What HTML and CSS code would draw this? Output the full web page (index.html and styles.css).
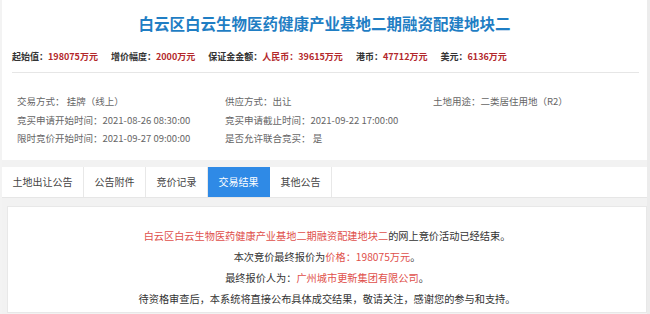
FILE: index.html
```html
<!DOCTYPE html>
<html lang="zh-CN">
<head>
  <meta charset="UTF-8" />
  <meta name="viewport" content="width=device-width, initial-scale=1.0"/>
  <title>交易结果</title>
  <link rel="stylesheet" href="styles.css">
</head>
<body>
  <div class="page">
    <h1 class="title">白云区白云生物医药健康产业基地二期融资配建地块二</h1>

    <div class="price-bar">
      <span class="price-item">起始值：<em>198075万元</em></span>
      <span class="price-item">增价幅度：<em>2000万元</em></span>
      <span class="price-item">保证金金额：<em>人民币：39615万元</em></span>
      <span class="price-item">港币：<em>47712万元</em></span>
      <span class="price-item">美元：<em>6136万元</em></span>
    </div>

    <div class="info">
      <span>交易方式： 挂牌（线上）</span>
      <span>供应方式：出让</span>
      <span>土地用途：二类居住用地（R2）</span>
      <span>竞买申请开始时间：2021-08-26 08:30:00</span>
      <span>竞买申请截止时间：2021-09-22 17:00:00</span>
      <span></span>
      <span>限时竞价开始时间：2021-09-27 09:00:00</span>
      <span>是否允许联合竞买： 是</span>
      <span></span>
    </div>

    <div class="tab-wrap">
      <nav class="tabs">
        <a href="#">土地出让公告</a>
        <a href="#">公告附件</a>
        <a href="#">竞价记录</a>
        <a href="#" class="active">交易结果</a>
        <a href="#">其他公告</a>
      </nav>
      <div class="result">
        <p><span class="red">白云区白云生物医药健康产业基地二期融资配建地块二</span>的网上竞价活动已经结束。</p>
        <p>本次竞价最终报价为<span class="red">价格：198075万元</span>。</p>
        <p>最终报价人为：<span class="red">广州城市更新集团有限公司</span>。</p>
        <p>待资格审查后，本系统将直接公布具体成交结果，敬请关注，感谢您的参与和支持。</p>
      </div>
    </div>
  </div>
</body>
</html>
```

FILE: styles.css
```css
* {
  box-sizing: border-box;
}
body {
  margin: 0;
  font-family: "Noto Sans CJK SC", "Noto Sans", sans-serif;
  background-color: #fff;
  color: #333;
}
.page {
  height: 314px;
  overflow: hidden;
  border-left: 2px solid #f3f3f3;
  border-right: 3px solid #ececec;
}
.title {
  margin: 0;
  height: 46px;
  line-height: 46px;
  text-align: center;
  font-size: 15.5px;
  font-weight: bold;
  color: #1f7ec4;
}
.price-bar {
  margin: 0 8px 0 10px;
  line-height: 22px;
  padding-bottom: 4px;
  border-bottom: 1px solid #e6e6e6;
  font-size: 9px;
  font-weight: bold;
  color: #333;
  white-space: nowrap;
}
.price-item {
  margin-right: 11px;
}
.price-item em {
  font-style: normal;
  color: #b3282b;
}
.info {
  display: grid;
  grid-template-columns: 208px 208px 1fr;
  padding: 19px 0 12px 15px;
  font-size: 9.5px;
  line-height: 18.5px;
  color: #666;
  white-space: nowrap;
}
.tab-wrap {
  background-color: #f2f2f2;
  padding-top: 7px;
  height: 200px;
}
.tabs {
  display: flex;
  height: 31px;
  background-color: #fff;
  border-bottom: 1px solid #e6e6e6;
}
.tabs a {
  padding: 0 10.5px;
  line-height: 30px;
  font-size: 10px;
  color: #444;
  text-decoration: none;
  border-right: 1px solid #e8e8e8;
}
.tabs a.active {
  background-color: #2f8ae6;
  color: #fff;
  border-right-color: #2f8ae6;
}
.result {
  margin: 8px 0 0 5px;
  background-color: #fff;
  border: 1px solid #e8e8e8;
  height: 107px;
  padding-top: 18px;
  text-align: center;
  font-size: 10.2px;
  line-height: 21px;
  color: #333;
}
.result p {
  margin: 0;
}
.red {
  color: #e0504b;
}
```
